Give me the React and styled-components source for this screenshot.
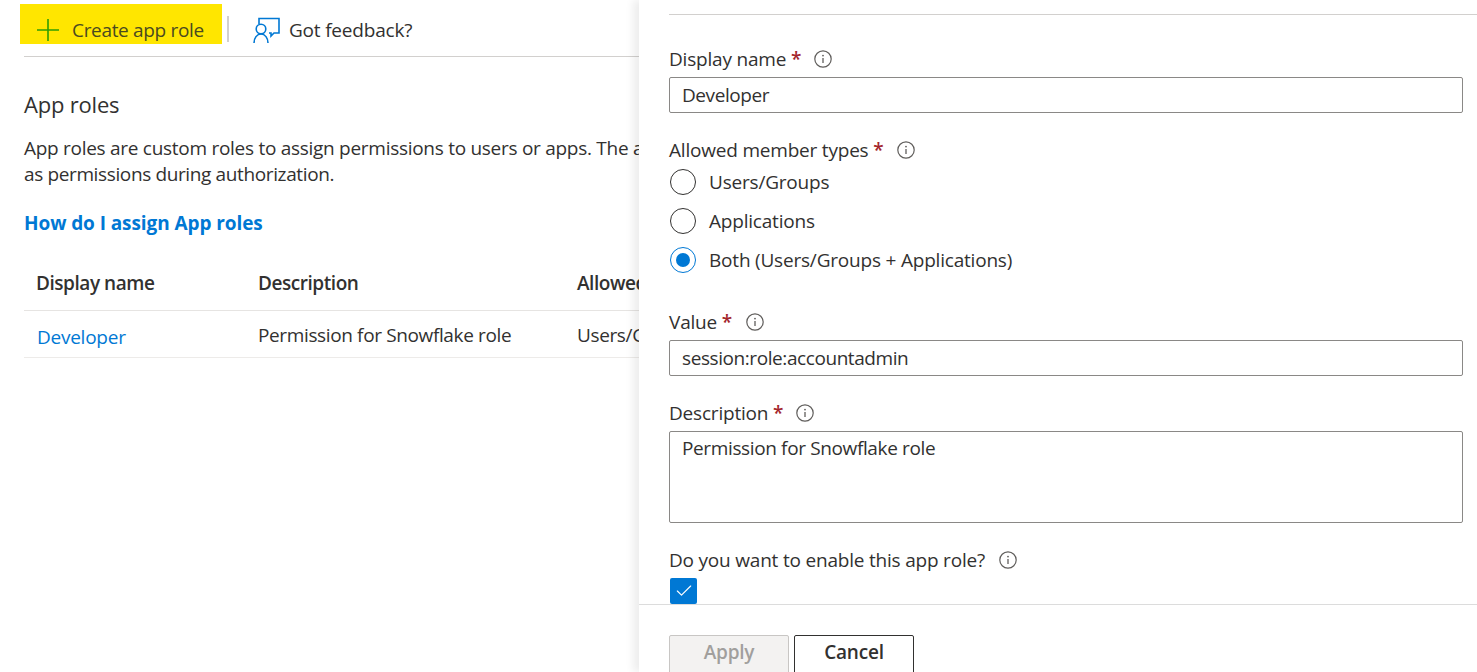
import styled, { createGlobalStyle } from "styled-components";
import { Check } from "lucide-react";

const GlobalStyle = createGlobalStyle`
  html, body {
    margin: 0;
    height: 672px;
    overflow: hidden;
    background: #fff;
    font-family: "Open Sans", "Noto Sans", sans-serif;
    color: #323130;
  }
`;

function InfoIcon() {
  return (
    <InfoSvg viewBox="0 0 18 18" fill="none">
      <circle cx="9" cy="9" r="8.2" stroke="#605e5c" strokeWidth="1.2" />
      <path d="M9 8v5" stroke="#605e5c" strokeWidth="1.3" />
      <circle cx="9" cy="5.6" r="0.9" fill="#605e5c" />
    </InfoSvg>
  );
}

function PlusIcon() {
  return (
    <svg width="22" height="22" viewBox="0 0 22 22" stroke="#2f9e00" strokeWidth="1.6">
      <path d="M11 0v22M0 11h22" />
    </svg>
  );
}

function FeedbackIcon() {
  return (
    <svg width="27" height="26" viewBox="0 0 27 26" fill="none" stroke="#0078d4" strokeWidth="1.6">
      <path d="M6 7V1.5h20V16h-5l-3 3v-3h-2" />
      <circle cx="8" cy="12" r="4.8" />
      <path d="M1 26c0-5 3-9 7-9s7 4 7 9" />
    </svg>
  );
}

function Label({ text, required = true, gap }) {
  return (
    <LabelRow gap={gap}>
      <span>
        {text}
        {required && <Star> *</Star>}
      </span>
      <InfoIcon />
    </LabelRow>
  );
}

export default function App() {
  return (
    <>
      <GlobalStyle />
      <Page>
        <Blade>
          <Toolbar>
            <CreateButton>
              <PlusIcon />
              Create app role
            </CreateButton>
            <ToolbarDivider />
            <FeedbackButton>
              <FeedbackIcon />
              Got feedback?
            </FeedbackButton>
          </Toolbar>
          <Content>
            <Heading>App roles</Heading>
            <Intro>
              <IntroLead>App roles are custom roles to assign permissions to users or apps. The application</IntroLead>
              <br />
              as permissions during authorization.
            </Intro>
            <AssignLink>How do I assign App roles</AssignLink>
            <Table>
              <HeadRow>
                <NameCell>Display name</NameCell>
                <DescCell>Description</DescCell>
                <TypeCell>Allowed member types</TypeCell>
              </HeadRow>
              <BodyRow>
                <NameCell>
                  <RoleLink>Developer</RoleLink>
                </NameCell>
                <DescCell>Permission for Snowflake role</DescCell>
                <TypeCell>Users/Groups,Applications</TypeCell>
              </BodyRow>
            </Table>
          </Content>
        </Blade>
        <Panel>
          <PanelTop />
          <Form>
            <Label text="Display name" gap={13} />
            <Input>Developer</Input>
            <MemberLabel>
              <Label text="Allowed member types" gap={14} />
            </MemberLabel>
            <Radios>
              <RadioRow>
                <Radio />
                Users/Groups
              </RadioRow>
              <RadioRow>
                <Radio />
                Applications
              </RadioRow>
              <RadioRow>
                <Radio checked />
                Both (Users/Groups + Applications)
              </RadioRow>
            </Radios>
            <ValueLabel>
              <Label text="Value" gap={14} />
            </ValueLabel>
            <Input>session:role:accountadmin</Input>
            <DescLabel>
              <Label text="Description" gap={13} />
            </DescLabel>
            <TextArea>Permission for Snowflake role</TextArea>
            <EnableLabel>
              <Label text="Do you want to enable this app role?" required={false} gap={14} />
            </EnableLabel>
            <CheckBox>
              <Check size={20} color="#fff" strokeWidth={1.4} />
            </CheckBox>
          </Form>
          <Footer>
            <ApplyButton>Apply</ApplyButton>
            <CancelButton>Cancel</CancelButton>
          </Footer>
        </Panel>
      </Page>
    </>
  );
}

const Page = styled.div`
  display: flex;
  width: 1477px;
  height: 672px;
  overflow: hidden;
  font-size: 19px;
  line-height: 24px;
  letter-spacing: -0.2px;
`;

const Blade = styled.div`
  width: 639px;
  flex-shrink: 0;
  overflow: hidden;
  white-space: nowrap;
`;

const Toolbar = styled.div`
  display: flex;
  align-items: flex-start;
  height: 56px;
  margin-left: 24px;
  border-bottom: 1px solid #d2d0ce;
`;

const CreateButton = styled.div`
  display: flex;
  align-items: center;
  gap: 13px;
  width: 202px;
  height: 40px;
  box-sizing: border-box;
  margin: 4px 0 0 -4px;
  padding: 12px 0 0 17px;
  background: #ffe600;
  color: #4a4a20;
  letter-spacing: -0.33px;
`;

const ToolbarDivider = styled.div`
  width: 2px;
  height: 26px;
  margin: 16px 24px 0 5px;
  background: #d2d0ce;
`;

const FeedbackButton = styled.div`
  display: flex;
  align-items: center;
  gap: 9px;
  margin-top: 17px;
`;

const Content = styled.div`
  padding: 31px 0 0 24px;
`;

const Heading = styled.div`
  font-size: 22px;
  line-height: 32px;
`;

const Intro = styled.div`
  margin-top: 15px;
  line-height: 26px;
  letter-spacing: -0.37px;
`;

const IntroLead = styled.span`
  letter-spacing: -0.28px;
`;

const AssignLink = styled.div`
  margin-top: 23px;
  line-height: 26px;
  font-weight: 700;
  letter-spacing: -0.08px;
  color: #0078d4;
`;

const Table = styled.div`
  margin-top: 27px;
`;

const HeadRow = styled.div`
  display: flex;
  align-items: center;
  height: 40px;
  padding-bottom: 7px;
  font-weight: 600;
  letter-spacing: -0.45px;
  border-bottom: 1px solid #e6e4e2;
`;

const BodyRow = styled.div`
  display: flex;
  align-items: center;
  height: 44px;
  padding-top: 2px;
  letter-spacing: -0.37px;
  border-bottom: 1px solid #edebe9;
`;

const NameCell = styled.div`
  width: 222px;
  padding-left: 12px;
  flex-shrink: 0;
`;

const DescCell = styled.div`
  width: 319px;
  flex-shrink: 0;
`;

const TypeCell = styled.div`
  flex-shrink: 0;
`;

const RoleLink = styled.span`
  display: inline-block;
  margin: 3px 0 0 1px;
  letter-spacing: -0.25px;
  color: #0078d4;
`;

const Panel = styled.div`
  position: relative;
  flex: 1;
  display: flex;
  flex-direction: column;
  min-width: 0;
  background: #fff;
  box-shadow: -6px 0 8px rgba(0, 0, 0, 0.07);
`;

const PanelTop = styled.div`
  height: 14px;
  margin-left: 30px;
  border-bottom: 1px solid #d2d0ce;
`;

const Form = styled.div`
  flex: 1;
  min-height: 0;
  padding: 29px 14px 0 30px;
`;

const LabelRow = styled.div`
  display: flex;
  align-items: center;
  gap: ${(p) => p.gap || 15}px;
  height: 30px;
`;

const Star = styled.span`
  color: #a4262c;
  font-weight: 600;
`;

const InfoSvg = styled.svg`
  width: 18px;
  height: 18px;
  flex-shrink: 0;
`;

const Input = styled.div`
  display: flex;
  align-items: center;
  height: 36px;
  box-sizing: border-box;
  margin-top: 3px;
  padding-left: 12px;
  letter-spacing: -0.42px;
  border: 1px solid #8a8886;
  border-radius: 2px;
`;

const MemberLabel = styled.div`
  margin-top: 22px;
`;

const Radios = styled.div`
  display: flex;
  flex-direction: column;
  gap: 13px;
  margin-top: 4px;
`;

const RadioRow = styled.div`
  display: flex;
  align-items: center;
  gap: 13px;
  height: 26px;
  margin-left: 1px;
`;

const Radio = styled.span`
  display: flex;
  align-items: center;
  justify-content: center;
  width: 26px;
  height: 26px;
  box-sizing: border-box;
  border-radius: 50%;
  border: 1px solid ${(p) => (p.checked ? "#0078d4" : "#323130")};

  &::after {
    content: "";
    display: ${(p) => (p.checked ? "block" : "none")};
    width: 14px;
    height: 14px;
    border-radius: 50%;
    background: #0078d4;
  }
`;

const ValueLabel = styled.div`
  margin-top: 34px;
`;

const DescLabel = styled.div`
  margin-top: 22px;
`;

const TextArea = styled.div`
  height: 92px;
  box-sizing: border-box;
  margin-top: 3px;
  padding: 4px 0 0 12px;
  letter-spacing: -0.37px;
  border: 1px solid #8a8886;
  border-radius: 2px;
`;

const EnableLabel = styled.div`
  margin-top: 22px;
`;

const CheckBox = styled.div`
  display: flex;
  align-items: center;
  justify-content: center;
  width: 27px;
  height: 26px;
  margin: 3px 0 0 1px;
  border-radius: 2px;
  background: #0078d4;
`;

const Footer = styled.div`
  display: flex;
  gap: 5px;
  height: 68px;
  flex-shrink: 0;
  box-sizing: border-box;
  padding: 30px 0 0 30px;
  border-top: 1px solid #dcdcdc;
`;

const ApplyButton = styled.div`
  display: flex;
  align-items: center;
  justify-content: center;
  width: 120px;
  height: 40px;
  flex-shrink: 0;
  box-sizing: border-box;
  padding-bottom: 6px;
  border: 1px solid #c8c6c4;
  border-radius: 2px;
  background: #f3f2f1;
  color: #a19f9d;
  font-weight: 600;
`;

const CancelButton = styled(ApplyButton)`
  border-color: #323130;
  background: #fff;
  color: #323130;
`;
